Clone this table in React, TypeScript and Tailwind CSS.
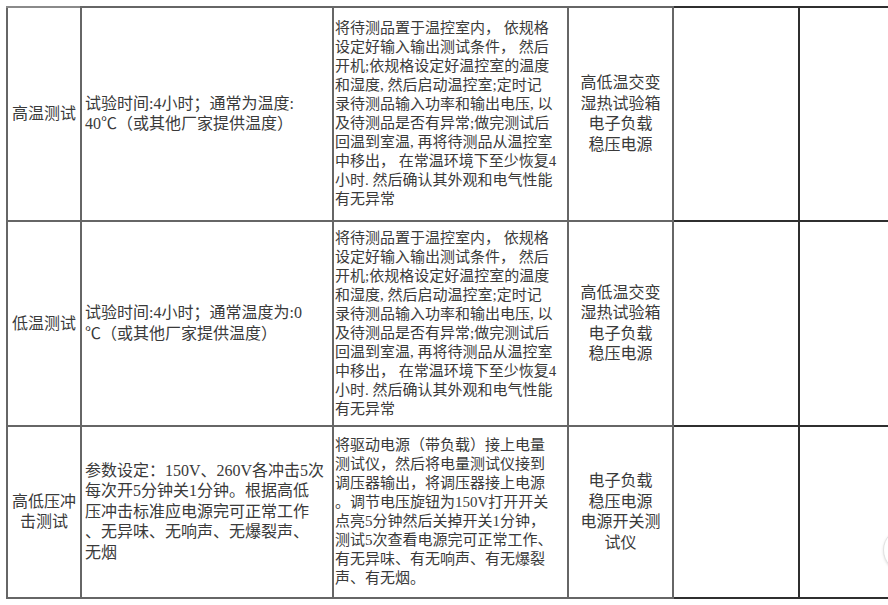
import React from 'react';

type Row = {
  name: string[];
  condition: string[];
  method: string[];
  equipment: string[];
  height: string;
};

const rows: Row[] = [
  {
    name: ['高温测试'],
    condition: ['试验时间:4小时；通常为温度:', '40℃（或其他厂家提供温度）'],
    method: [
      '将待测品置于温控室内， 依规格',
      '设定好输入输出测试条件， 然后',
      '开机;依规格设定好温控室的温度',
      '和湿度, 然后启动温控室;定时记',
      '录待测品输入功率和输出电压, 以',
      '及待测品是否有异常;做完测试后',
      '回温到室温, 再将待测品从温控室',
      '中移出， 在常温环境下至少恢复4',
      '小时. 然后确认其外观和电气性能',
      '有无异常',
    ],
    equipment: ['高低温交变', '湿热试验箱', '电子负载', '稳压电源'],
    height: 'h-[214px]',
  },
  {
    name: ['低温测试'],
    condition: ['试验时间:4小时；通常温度为:0', '℃（或其他厂家提供温度）'],
    method: [
      '将待测品置于温控室内， 依规格',
      '设定好输入输出测试条件， 然后',
      '开机;依规格设定好温控室的温度',
      '和湿度, 然后启动温控室;定时记',
      '录待测品输入功率和输出电压, 以',
      '及待测品是否有异常;做完测试后',
      '回温到室温, 再将待测品从温控室',
      '中移出， 在常温环境下至少恢复4',
      '小时. 然后确认其外观和电气性能',
      '有无异常',
    ],
    equipment: ['高低温交变', '湿热试验箱', '电子负载', '稳压电源'],
    height: 'h-[205px]',
  },
  {
    name: ['高低压冲', '击测试'],
    condition: [
      '参数设定：150V、260V各冲击5次',
      '每次开5分钟关1分钟。根据高低',
      '压冲击标准应电源完可正常工作',
      '、无异味、无响声、无爆裂声、',
      '无烟',
    ],
    method: [
      '将驱动电源（带负载）接上电量',
      '测试仪，然后将电量测试仪接到',
      '调压器输出，将调压器接上电源',
      '。调节电压旋钮为150V打开开关',
      '点亮5分钟然后关掉开关1分钟，',
      '测试5次查看电源完可正常工作、',
      '有无异味、有无响声、有无爆裂',
      '声、有无烟。',
    ],
    equipment: ['电子负载', '稳压电源', '电源开关测', '试仪'],
    height: 'h-[172px]',
  },
];

const Lines = ({ lines }: { lines: string[] }) => (
  <>
    {lines.map((line, i) => (
      <div key={i} className="whitespace-pre">
        {line}
      </div>
    ))}
  </>
);

export default function App() {
  return (
    <div
      lang="zh-CN"
      className="relative w-[888px] h-[605px] overflow-hidden bg-white text-[#3a3a3a]"
      style={{ fontFamily: '"Liberation Serif", "Noto Sans CJK SC", serif' }}
    >
      <div className="pt-[6px] pl-[6px]">
        <table className="table-fixed border-collapse w-[990px]">
          <colgroup>
            <col className="w-[74px]" />
            <col className="w-[252px]" />
            <col className="w-[235px]" />
            <col className="w-[105px]" />
            <col className="w-[126px]" />
            <col className="w-[198px]" />
          </colgroup>
          <tbody>
            {rows.map((row, i) => (
              <tr key={i} className={row.height}>
                <td className="border-2 border-[#666] border-t-[#8a8a8a] text-center align-middle text-[16px] leading-[20px]">
                  <Lines lines={row.name} />
                </td>
                <td className="border-2 border-[#666] px-[3px] align-middle text-[16px] leading-[20.5px]">
                  <Lines lines={row.condition} />
                </td>
                <td className="border-2 border-[#666] px-[1px] align-middle text-[15px] leading-[19px]">
                  <Lines lines={row.method} />
                </td>
                <td className="border-2 border-[#666] text-center align-middle text-[16px] leading-[20.5px]">
                  <Lines lines={row.equipment} />
                </td>
                <td className="border-2 border-[#2f2f2f]" />
                <td className="border-2 border-[#2f2f2f]" />
              </tr>
            ))}
          </tbody>
        </table>
      </div>
      <div className="absolute left-[883px] top-[528px] w-[44px] h-[44px] rounded-full border border-[#e2e2e2] bg-white shadow-sm" />
    </div>
  );
}
